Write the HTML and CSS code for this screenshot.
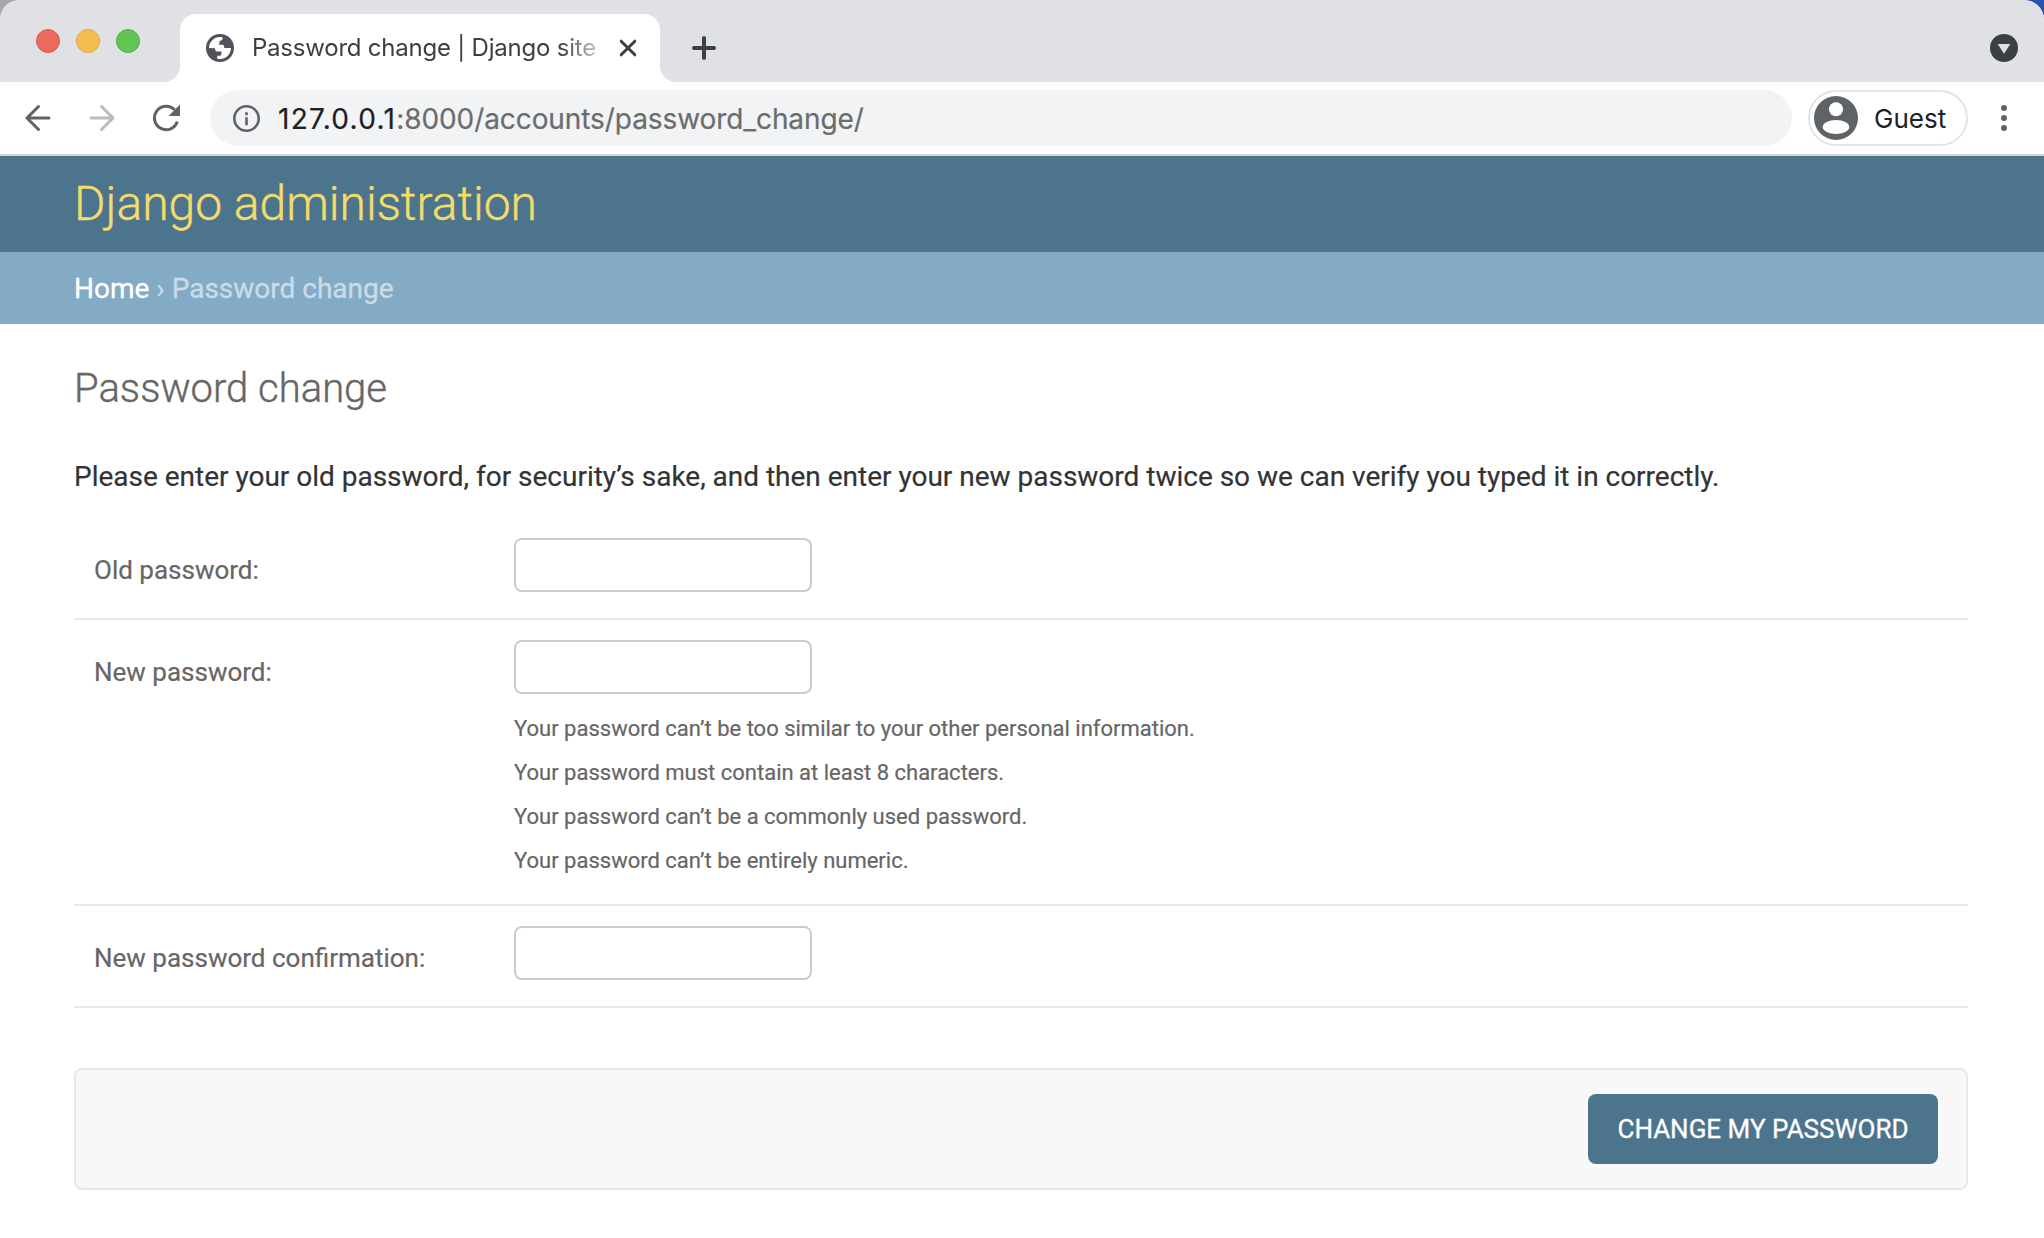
FILE: index.html
```html
<!DOCTYPE html>
<html lang="en">
<head>
<meta charset="utf-8">
<title>Password change | Django site admin</title>
<link rel="stylesheet" href="styles.css">
</head>
<body>
<div class="window">
  <header class="tabstrip">
    <div class="lights"><i class="light red"></i><i class="light yellow"></i><i class="light green"></i></div>
    <div class="tab">
      <svg class="globe" viewBox="0 0 28 28"><circle cx="14" cy="14" r="14" fill="#505359"/><path fill="#fff" d="M3 14A11 11 0 0 1 16.500 3.300V4.500C16.500 6 15.500 6.800 13.500 6.800V9C13.500 10.200 12.800 10.800 11.500 10.800H16.200C18 10.800 18.300 12.300 18.300 14H25A11 11 0 0 1 11.200 24.700V21.800H13.200C14.600 21.800 15.400 21 15.400 19.700V17.600H11.500C9.300 17.600 9 16 9 14.200Z"/></svg>
      <span class="tab-title">Password change | Django site</span>
      <svg class="tab-close" viewBox="0 0 18 18"><path d="M2.200 2.200l13.600 13.600M15.800 2.200L2.200 15.800"/></svg>
    </div>
    <svg class="new-tab" viewBox="0 0 24 24"><path d="M12 2v20M2 12h20"/></svg>
    <svg class="tab-search" viewBox="0 0 28 28"><circle cx="14" cy="14" r="14" fill="#3c4043"/><path d="M7.700 10h12.600L14 19.800z" fill="#dfe1e5"/></svg>
  </header>
  <div class="toolbar">
    <svg class="nav back" viewBox="0 0 28 28"><path d="M25 14H3M14.500 2.500L3 14l11.500 11.500"/></svg>
    <svg class="nav forward" viewBox="0 0 28 28"><path d="M3 14h22M13.500 2.500L25 14 13.500 25.500"/></svg>
    <svg class="nav reload" viewBox="0 0 28 28"><path d="M25.300 17.500A11.700 11.700 0 1 1 22.500 5.800"/><path class="solid" d="M28 0.500V12H16.500z"/></svg>
    <div class="omnibox">
      <svg class="info" viewBox="0 0 28 28"><circle cx="14.500" cy="14.500" r="12.200"/><path d="M14.500 13.300v8M14.500 8.200v3"/></svg>
      <span class="url"><b>127.0.0.1</b>:8000/accounts/password_change/</span>
    </div>
    <div class="profile">
      <svg class="avatar" viewBox="0 0 44 44"><circle cx="22" cy="22" r="22" fill="#5f6368"/><circle cx="22" cy="13.300" r="7" fill="#fff"/><ellipse cx="22" cy="31" rx="13.200" ry="7" fill="#fff"/></svg>
      <span>Guest</span>
    </div>
    <svg class="menu" viewBox="0 0 6 26"><circle cx="3" cy="3" r="3"/><circle cx="3" cy="13" r="3"/><circle cx="3" cy="23" r="3"/></svg>
  </div>
  <div class="site-header">Django administration</div>
  <nav class="breadcrumbs"><a>Home</a> › Password change</nav>
  <main class="content">
    <h1>Password change</h1>
    <p class="intro">Please enter your old password, for security’s sake, and then enter your new password twice so we can verify you typed it in correctly.</p>
    <form>
      <div class="row"><label for="old">Old password:</label><input id="old" type="password"></div>
      <div class="row tall"><label for="new1">New password:</label>
        <div class="field"><input id="new1" type="password">
          <ul class="help">
            <li>Your password can’t be too similar to your other personal information.</li>
            <li>Your password must contain at least 8 characters.</li>
            <li>Your password can’t be a commonly used password.</li>
            <li>Your password can’t be entirely numeric.</li>
          </ul></div></div>
      <div class="row"><label for="new2">New password confirmation:</label><input id="new2" type="password"></div>
      <div class="submit-row"><button type="button">CHANGE MY PASSWORD</button></div>
    </form>
  </main>
</div>
</body>
</html>
```
FILE: styles.css
```css
* { box-sizing: border-box; }
body { margin: 0; background: linear-gradient(90deg, #a5a7ab 50%, #2c4fb0 50%); font-family: Roboto, sans-serif; color: #333; }
.window { height: 1238px; background: #fff; border-radius: 20px 20px 0 0; overflow: hidden; }
svg { display: block; flex: none; }

.tabstrip { display: flex; height: 82px; padding: 14px 26px 0 36px; background: #dfe1e5; font-family: Inter, sans-serif; }
.lights { display: flex; gap: 16px; width: 144px; padding-top: 15px; }
.light { width: 24px; height: 24px; border-radius: 50%; border: 1px solid; }
.red { background: #ed6a5e; border-color: #d9574c; }
.yellow { background: #f5bf4f; border-color: #dca73c; }
.green { background: #61c554; border-color: #50ae42; }
.tab { position: relative; display: flex; align-items: flex-start; width: 480px; height: 68px; padding: 20px 22px 0 26px; border-radius: 16px 16px 0 0; background: #fff; }
.tab::before, .tab::after { content: ""; position: absolute; bottom: 0; width: 16px; height: 16px; }
.tab::before { left: -16px; background: radial-gradient(circle at 0 0, #dfe1e5 15.500px, #fff 16.500px); }
.tab::after { right: -16px; background: radial-gradient(circle at 100% 0, #dfe1e5 15.500px, #fff 16.500px); }
.globe { width: 28px; height: 28px; }
.tab-title { width: 346px; margin-left: 18px; white-space: nowrap; font-size: 24px; line-height: 28px; letter-spacing: -0.220px; color: #3c4043; -webkit-mask-image: linear-gradient(90deg, #000 308px, rgba(0, 0, 0, 0.300) 344px); }
.tab-close { width: 18px; height: 18px; margin: 5px 0 0 21px; fill: none; stroke: #3c4043; stroke-width: 3; stroke-linecap: round; }
.new-tab { width: 24px; height: 24px; margin: 22px 0 0 32px; fill: none; stroke: #3c4043; stroke-width: 4; stroke-linecap: round; }
.tab-search { width: 28px; height: 28px; margin: 20px 0 0 auto; }

.toolbar { display: flex; align-items: center; height: 74px; padding: 0 37px 0 24px; border-bottom: 2px solid #d5d8d9; font-family: Inter, sans-serif; }
.nav { width: 28px; height: 28px; fill: none; stroke: #5f6368; stroke-width: 3; stroke-linecap: round; }
.forward { margin-left: 36px; stroke: #babcbe; }
.reload { margin-left: 36px; stroke-linecap: butt; }
.solid { fill: #5f6368; stroke: none; }
.omnibox { display: flex; align-items: center; width: 1582px; height: 56px; margin-left: 30px; padding-left: 22px; border-radius: 28px; background: #f1f3f4; }
.info { width: 28px; height: 28px; fill: none; stroke: #5f6368; stroke-width: 2.600; }
.url { margin-left: 18px; padding-top: 1px; font-size: 28px; letter-spacing: -0.080px; color: #6b6c6e; -webkit-text-stroke: 0.200px; }
.url b { font-weight: 400; letter-spacing: 1.300px; color: #202124; }
.profile { display: flex; align-items: center; gap: 16px; width: 160px; height: 56px; margin-left: 16px; padding-left: 4px; border: 2px solid #e3e4e6; border-radius: 28px; font-size: 26px; color: #202124; }
.profile span { padding-top: 1px; }
.avatar { width: 44px; height: 44px; }
.menu { width: 6px; height: 26px; margin-left: auto; fill: #5f6368; }

.site-header { height: 96px; padding-left: 74px; background: #4d748d; color: #f4dc6b; font-size: 48px; font-weight: 300; line-height: 95px; -webkit-text-stroke: 0.400px; }
.breadcrumbs { height: 72px; padding-left: 74px; background: #84abc5; color: #c9dce8; font-size: 28px; line-height: 74px; -webkit-text-stroke: 0.300px; }
.breadcrumbs a { color: #fff; }
.content { padding: 41px 76px 0 74px; -webkit-text-stroke: 0.200px; }
h1 { margin: 0; font-size: 40px; font-weight: 300; line-height: 48px; color: #666; -webkit-text-stroke: 0.400px; }
.intro { margin: 40px 0 0; font-size: 28px; line-height: 48px; letter-spacing: -0.010px; }
form { margin-top: 17px; }
.row { display: flex; align-items: flex-start; padding: 20px 20px 26px; border-bottom: 2px solid #e8e8e8; }
.tall { padding-bottom: 21px; }
label { width: 420px; padding-top: 16px; color: #666; font-size: 26px; line-height: 32px; }
input { display: block; width: 298px; height: 54px; border: 2px solid #ccc; border-radius: 8px; background: #fff; }
.help { margin: 0; padding: 13px 0 0; list-style: none; color: #666; font-size: 22px; line-height: 44px; }
.submit-row { display: flex; justify-content: flex-end; height: 122px; margin-top: 60px; padding: 24px 28px; border: 2px solid #e8e8e8; border-radius: 8px; background: #f8f8f8; }
button { width: 350px; height: 70px; padding: 0; border: 0; border-radius: 8px; background: #4d748d; color: #fff; font: 400 26px/70px Roboto, sans-serif; -webkit-text-stroke: 0.300px; }
```
